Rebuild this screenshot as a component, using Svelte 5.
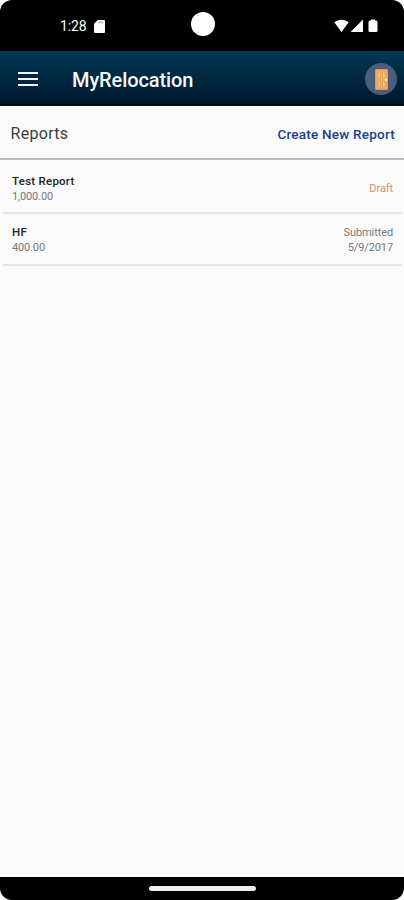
<script>
    const title = "MyRelocation";

    let reports = [
        { id: 1, name: "Test Report", amount: "1,000.00", status: "Draft", date: "" },
        { id: 2, name: "HF", amount: "400.00", status: "Submitted", date: "5/9/2017" },
    ];
</script>

<div class="screen">
    <div class="status-bar">
        <div class="status-left">
            <span class="clock">1:28</span>
            <svg width="11" height="13" viewBox="0 0 11 13">
                <path d="M3.8 0H10a1 1 0 0 1 1 1v11a1 1 0 0 1-1 1H1a1 1 0 0 1-1-1V3.800z" fill="#fff" />
                <path d="M4.500 2.200h4.500" stroke="#777" stroke-width=".8" />
            </svg>
        </div>
        <div class="camera"></div>
        <svg class="signals" width="46" height="14" viewBox="0 0 46 14">
            <path d="M.3 3.300C4.500-.2 10.500-.2 14.700 3.300L7.500 13z" fill="#fff" />
            <path d="M29 .5V13H16.500z" fill="#fff" />
            <path d="M37 .5h4v1h1a1.500 1.500 0 0 1 1.500 1.500v8.700a1.300 1.300 0 0 1-1.300 1.300h-6.400a1.300 1.300 0 0 1-1.300-1.300V3A1.500 1.500 0 0 1 36 1.500h1z" fill="#fff" />
        </svg>
    </div>

    <header class="top-nav">
        <div class="hamburger-menu">
            <div></div>
            <div></div>
            <div></div>
        </div>
        <h1>{title}</h1>
        <div class="avatar">
            <svg width="13" height="21" viewBox="0 0 13 21">
                <rect x=".5" y=".5" width="12" height="20" rx=".5" fill="#f0ad62" stroke="#e09a50" />
                <path d="M3 3h2.500v6H3zM7.500 3H10v6H7.500zM3 12h2.500v6H3zM7.500 12H10v6H7.500z" fill="#ffc985" stroke="#d9954f" stroke-width=".6" />
                <circle cx="11" cy="10.700" r="1.200" fill="#fff0bd" />
            </svg>
        </div>
    </header>

    <main>
        <div class="page-head">
            <h2>Reports</h2>
            <span class="create">Create New Report</span>
        </div>
        {#each reports as report (report.id)}
            <div class="report">
                <div class="info">
                    <div class="name">{report.name}</div>
                    <div class="amount">{report.amount}</div>
                </div>
                <div class="state {report.status === 'Draft' ? 'draft' : ''}">
                    <div class="status">{report.status}</div>
                    {#if report.date}
                        <div class="date">{report.date}</div>
                    {/if}
                </div>
            </div>
        {/each}
    </main>

    <div class="bottom-bar">
        <div></div>
    </div>
</div>

<style>
    :global(body) {
        margin: 0;
        background: #fff;
    }

    .screen {
        display: flex;
        flex-direction: column;
        width: 404px;
        height: 900px;
        overflow: hidden;
        border-radius: 12px;
        background: #fafafa;
        font-family: Roboto, sans-serif;
    }

    .status-bar {
        display: grid;
        grid-template-columns: 1fr 24px 1fr;
        flex: none;
        height: 51px;
        box-sizing: border-box;
        padding-bottom: 3px;
        align-items: center;
        background: #000;
    }

    .status-left {
        display: flex;
        align-items: center;
        gap: 7px;
        padding: 4px 0 0 60px;
        color: #fff;
    }

    .clock {
        font-size: 14px;
        line-height: 16px;
        font-weight: 400;
        letter-spacing: -0.1px;
    }

    .camera {
        width: 24px;
        height: 24px;
        margin-left: 1px;
        border-radius: 50%;
        background: #fff;
    }

    .signals {
        justify-self: end;
        margin: 3px 24px 0 0;
    }

    .top-nav {
        display: flex;
        flex: none;
        align-items: center;
        height: 55px;
        box-sizing: border-box;
        padding: 3px 7px 0 18px;
        border-bottom: 2px solid #0b0c10;
        background: linear-gradient(#003954, #00172d);
    }

    .hamburger-menu {
        display: flex;
        flex-direction: column;
        gap: 4px;
        width: 20px;
    }

    .hamburger-menu > div {
        height: 2px;
        background: #f4f6f8;
    }

    h1 {
        flex: 1;
        margin: 2px 0 0 34px;
        color: #f5f7f9;
        font-size: 20px;
        line-height: 24px;
        font-weight: 500;
        letter-spacing: -0.1px;
    }

    .avatar {
        display: flex;
        align-items: center;
        justify-content: center;
        width: 32px;
        height: 32px;
        border-radius: 50%;
        background: #4b5d7b;
    }

    main {
        flex: 1;
    }

    .page-head {
        display: flex;
        align-items: center;
        justify-content: space-between;
        height: 54px;
        box-sizing: border-box;
        padding: 2px 9px 0 10.5px;
        border-bottom: 2px solid #bcbcbc;
    }

    h2 {
        margin: 1px 0 0;
        color: #3c3c3c;
        font-size: 16px;
        font-weight: 400;
        letter-spacing: 0.3px;
    }

    .create {
        padding-top: 1px;
        color: #173f8f;
        font-size: 13.5px;
        font-weight: 500;
        letter-spacing: 0.22px;
    }

    .report {
        display: flex;
        align-items: center;
        justify-content: space-between;
        height: 52px;
        box-sizing: border-box;
        margin: 0 2px 0 3px;
        padding: 2px 9px 0 9px;
        border-bottom: 2px solid #e6e6e6;
        font-size: 11px;
        line-height: 15px;
    }

    .report:nth-child(2) {
        height: 54px;
    }

    .report:nth-child(2) .info {
        padding-top: 3px;
    }

    .name {
        color: #222;
        font-size: 11.5px;
        font-weight: 500;
        letter-spacing: 0.25px;
    }

    .amount,
    .state {
        color: #777;
    }

    .amount {
        letter-spacing: -0.15px;
    }

    .state {
        text-align: right;
    }

    .status {
        letter-spacing: -0.1px;
    }

    .date {
        letter-spacing: -0.1px;
    }

    .draft {
        padding-top: 2px;
        color: #d29169;
    }

    .bottom-bar {
        display: flex;
        flex: none;
        align-items: center;
        justify-content: center;
        height: 23px;
        border-top: 3px solid #fff;
        background: #000;
    }

    .bottom-bar > div {
        width: 107px;
        height: 5px;
        border-radius: 3px;
        background: #f0f0f0;
    }
</style>
